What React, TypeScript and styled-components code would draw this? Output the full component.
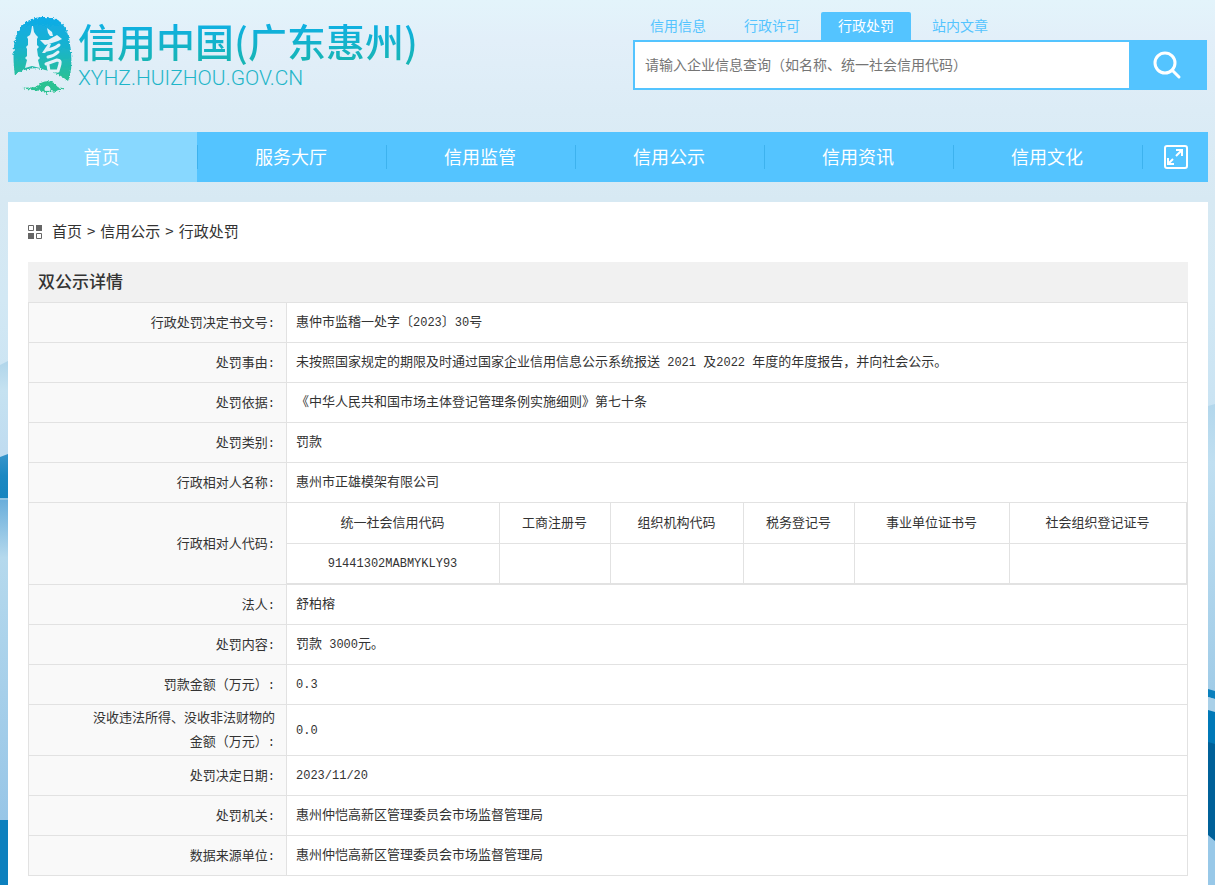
import React, { Fragment } from 'react';
import styled, { createGlobalStyle } from 'styled-components';

const BLUE = '#54c4ff';
const LINE = '#e2e2e2';
const SANS = "'Noto Sans CJK SC', 'Noto Sans', sans-serif";

const GlobalStyle = createGlobalStyle`
  * { box-sizing: border-box; }
  body {
    margin: 0;
    color: #333;
    font-family: ${SANS};
    background: #9ccbe9;
  }
  a { color: inherit; text-decoration: none; }
`;

const Page = styled.div`
  position: relative;
  overflow: hidden;
  background: linear-gradient(
    #e3f4fb 0px, #e2eff9 40px, #dcecf6 110px, #d7e9f3 200px,
    #d2e8f4 300px, #c4e0f2 480px, #b5d8ed 600px, #98c8e8 820px
  );
`;

const Shore = styled.svg<{ $side: 'left' | 'right' }>`
  position: absolute;
  top: 0;
  ${(p) => p.$side}: 0;
`;

const Wrap = styled.div`
  position: relative;
  max-width: 1215px;
  margin: 0 auto;
  padding: 0 7px 0 8px;
`;

const Header = styled.header`
  display: flex;
  justify-content: space-between;
  align-items: flex-start;
  height: 132px;
  padding: 12px 1px 0 4px;
`;

const Brand = styled.a`
  display: flex;
  gap: 4px;
`;

const BrandText = styled.span`
  display: flex;
  flex-direction: column;
  padding-top: 2px;
  white-space: nowrap;
`;

const BrandName = styled.span`
  font-size: 39px;
  font-weight: 500;
  line-height: 52px;
  color: transparent;
  background: linear-gradient(#0fb0e2 20%, #17b5b5 90%);
  background-clip: text;
  -webkit-background-clip: text;
`;

const BrandUrl = styled.span`
  font: 300 21px/24px Roboto, sans-serif;
  color: #1fb5c8;
`;

const Search = styled.form`
  width: 574px;
`;

const Tabs = styled.div`
  display: flex;
  gap: 4px;
`;

const Tab = styled.button<{ $active?: boolean }>`
  width: 90px;
  height: 28px;
  padding: 0 0 2px;
  border: 0;
  border-radius: 2px 2px 0 0;
  font: 14px/26px ${SANS};
  color: ${(p) => (p.$active ? '#fff' : BLUE)};
  background: ${(p) => (p.$active ? BLUE : 'transparent')};
`;

const SearchBar = styled.div`
  display: flex;
  height: 50px;
  border: 2px solid ${BLUE};
  background: ${BLUE};
`;

const SearchInput = styled.input`
  flex: 1;
  min-width: 0;
  padding: 0 10px 2px;
  border: 0;
  border-radius: 0;
  background: #fff;
  font: 14px/20px ${SANS};
  &::placeholder { color: #757575; }
`;

const SearchButton = styled.button`
  display: grid;
  place-items: center;
  width: 76px;
  padding: 0;
  border: 0;
  background: ${BLUE};
`;

const Nav = styled.nav`
  display: flex;
  height: 50px;
  background: ${BLUE};
  color: #fff;
`;

const NavItem = styled.a<{ $active?: boolean }>`
  display: flex;
  flex: 1;
  align-items: center;
  font-size: 18px;
  background: ${(p) => (p.$active ? '#88d8ff' : 'transparent')};
`;

const NavLabel = styled.span<{ $divided: boolean }>`
  flex: 1;
  height: 24px;
  padding-right: 2px;
  line-height: 22px;
  text-align: center;
  border-left: ${(p) => (p.$divided ? '1px solid #3db2ee' : '0')};
`;

const NavMore = styled.button`
  display: flex;
  align-items: center;
  width: 66px;
  padding: 0;
  border: 0;
  background: none;
`;

const NavMoreInner = styled.span`
  display: grid;
  flex: 1;
  place-items: center;
  height: 24px;
  border-left: 1px solid #3db2ee;
`;

const Panel = styled.main`
  margin-top: 20px;
  padding: 0 20px 20px;
  background: #fff;
`;

const Crumbs = styled.nav`
  display: flex;
  align-items: center;
  gap: 5px;
  height: 60px;
  font-size: 15px;
  line-height: 24px;
  svg { margin-right: 5px; }
  a, span { padding-bottom: 2px; }
`;

const Heading = styled.h1`
  height: 40px;
  margin: 0;
  padding-left: 10px;
  background: #f1f1f1;
  font-size: 17px;
  font-weight: 500;
  line-height: 38px;
`;

const Table = styled.table`
  width: 100%;
  border-collapse: collapse;
  table-layout: fixed;
  font-size: 13px;
  line-height: 24px;
`;

const LabelCell = styled.th`
  width: 258px;
  height: 40px;
  padding: 0 11px 2px 60px;
  border: 1px solid ${LINE};
  background: #f9f9f9;
  font-weight: 400;
  text-align: right;
`;

const ValueCell = styled.td<{ $flush?: boolean }>`
  padding: ${(p) => (p.$flush ? '0' : '0 9px 3px')};
  border: 1px solid ${LINE};
`;

const CodeTable = styled.table`
  width: 100%;
  border-spacing: 0;
  table-layout: fixed;
  text-align: center;
  th, td {
    height: 40px;
    padding: 0 1px 3px 0;
    border: solid ${LINE};
    border-width: 0 1px 1px 0;
    font-weight: 400;
  }
  th { height: 41px; }
`;

const Latin = styled.span`
  font: 12px/16px 'Liberation Mono', monospace;
  white-space: pre-wrap;
`;

/* Sets digits, letters and half-width marks in the narrow monospace face. */
function Mixed({ text }: { text: string }) {
  return (
    <>
      {text.split(/([\x20-\x7e]+)/).map((part, i) =>
        i % 2 ? <Latin key={i}>{part}</Latin> : <Fragment key={i}>{part}</Fragment>
      )}
    </>
  );
}

function Emblem() {
  return (
    <svg width="62" height="84" viewBox="0 0 62 84" aria-hidden="true">
      <defs>
        <linearGradient id="seal" x1="0" y1="0" x2="0" y2="1">
          <stop offset="0" stopColor="#0fabe8" />
          <stop offset="0.45" stopColor="#18b2d0" />
          <stop offset="1" stopColor="#2cc292" />
        </linearGradient>
        <filter id="rough" x="-10%" y="-10%" width="120%" height="120%">
          <feTurbulence type="fractalNoise" baseFrequency="0.45" numOctaves="2" seed="4" />
          <feDisplacementMap in="SourceGraphic" scale="4" xChannelSelector="R" yChannelSelector="G" />
        </filter>
      </defs>
      <g filter="url(#rough)">
        <path
          fill="url(#seal)"
          d="M13 11C20 4 38 3 46 8C54 13 58 25 59 40C60 54 59 63 56 69C47 62 40 59 33 58C23 54 12 57 3 63C1 52 1 36 3 28C5 19 9 14 13 11Z"
        />
        <path fill="#2cc292" d="M10 76C20 75 24 76 27 73C30 68 41 68 44 73C46 76 48 76 52 76L49 78L44 80L38 79L35 82L30 79L20 78Z" />
      </g>
      <g fill="#e3f1f9">
        <path d="M20 14L21 14L22 20L24 23L26 25L25 27L25 33L27 35L25 37L26 44L28 46L26 48L28 56L20 54L13 56L15 48L13 46L15 44L15 37L14 35L16 33L16 27L15 25L18 23L19 20Z" />
        <path d="M35 16L40 20L41 24L38 24L36 21Z" />
        <path d="M28 28L36 28L45 23L50 27L46 29L37 32L33 33Z" />
        <path d="M36 32L39 32L37 37L33 41L30 41Z" />
      </g>
      <g fill="none" stroke="#e3f1f9" strokeLinecap="round" strokeLinejoin="round">
        <path strokeWidth="3" d="M35 38Q42 37 47 33M36 45Q42 44 46 40" />
        <path strokeWidth="3" d="M34 52L45 48Q49 48 48 52L46 59M36 53L37 59L45 59" />
        <path fill="#e3f1f9" strokeWidth="1" d="M33 78C32 73 39 73 38 78Z" />
      </g>
    </svg>
  );
}

function LeftShore() {
  return (
    <Shore $side="left" width="8" height="885" viewBox="0 0 8 885" aria-hidden="true">
      <defs>
        <linearGradient id="mist" x1="0" y1="0" x2="0" y2="1">
          <stop offset="0" stopColor="#b0d5ea" />
          <stop offset="0.3" stopColor="#c5e2f1" />
          <stop offset="1" stopColor="#bfdbf0" />
        </linearGradient>
        <linearGradient id="hill" x1="0" y1="0" x2="0" y2="1">
          <stop offset="0" stopColor="#3795cb" />
          <stop offset="0.5" stopColor="#1b88c2" />
          <stop offset="1" stopColor="#1685bf" />
        </linearGradient>
        <linearGradient id="water" x1="0" y1="0" x2="0" y2="1">
          <stop offset="0" stopColor="#6aaedb" />
          <stop offset="0.18" stopColor="#b5d9ed" />
          <stop offset="1" stopColor="#98c6e7" />
        </linearGradient>
      </defs>
      <path fill="url(#mist)" d="M0 365L8 361V460H0Z" />
      <path fill="url(#hill)" d="M0 457L8 454V498H0Z" />
      <path fill="#90c5e3" d="M0 498H8V500H0Z" />
      <path fill="url(#water)" d="M0 500H8V820H0Z" />
      <path fill="#0c80be" d="M0 820H8V885H0Z" />
    </Shore>
  );
}

function RightShore() {
  return (
    <Shore $side="right" width="7" height="885" viewBox="0 0 7 885" aria-hidden="true">
      <defs>
        <linearGradient id="haze" x1="0" y1="0" x2="0" y2="1">
          <stop offset="0" stopColor="#b3d7ec" />
          <stop offset="0.2" stopColor="#c0dff1" />
          <stop offset="1" stopColor="#9fcbe7" />
        </linearGradient>
      </defs>
      <path fill="url(#haze)" d="M0 406L7 404V700H0Z" />
      <path fill="#0a80bd" d="M0 689L7 691V699L0 697Z" />
      <path fill="#a9d0e8" d="M0 697L7 699V712L0 710Z" />
      <path fill="#0079b8" d="M0 710L7 712V760H0Z" />
      <path fill="#006199" d="M0 742L7 744V841L0 835Z" />
    </Shore>
  );
}

const tabs = ['信用信息', '行政许可', '行政处罚', '站内文章'];
const navItems = ['首页', '服务大厅', '信用监管', '信用公示', '信用资讯', '信用文化'];

const codeColumns = [
  { name: '统一社会信用代码', value: '91441302MABMYKLY93', width: 213 },
  { name: '工商注册号', value: '', width: 111 },
  { name: '组织机构代码', value: '', width: 133 },
  { name: '税务登记号', value: '', width: 111 },
  { name: '事业单位证书号', value: '', width: 155 },
  { name: '社会组织登记证号', value: '', width: undefined },
];

const rows: { label: string; value?: string }[] = [
  { label: '行政处罚决定书文号:', value: '惠仲市监稽一处字〔2023〕30号' },
  {
    label: '处罚事由:',
    value: '未按照国家规定的期限及时通过国家企业信用信息公示系统报送 2021 及2022 年度的年度报告，并向社会公示。',
  },
  { label: '处罚依据:', value: '《中华人民共和国市场主体登记管理条例实施细则》第七十条' },
  { label: '处罚类别:', value: '罚款' },
  { label: '行政相对人名称:', value: '惠州市正雄模架有限公司' },
  { label: '行政相对人代码:' },
  { label: '法人:', value: '舒柏榕' },
  { label: '处罚内容:', value: '罚款 3000元。' },
  { label: '罚款金额（万元）:', value: '0.3' },
  { label: '没收违法所得、没收非法财物的金额（万元）:', value: '0.0' },
  { label: '处罚决定日期:', value: '2023/11/20' },
  { label: '处罚机关:', value: '惠州仲恺高新区管理委员会市场监督管理局' },
  { label: '数据来源单位:', value: '惠州仲恺高新区管理委员会市场监督管理局' },
];

function Codes() {
  return (
    <CodeTable>
      <colgroup>
        {codeColumns.map((c) => (
          <col key={c.name} width={c.width} />
        ))}
      </colgroup>
      <thead>
        <tr>
          {codeColumns.map((c) => (
            <th key={c.name} scope="col">{c.name}</th>
          ))}
        </tr>
      </thead>
      <tbody>
        <tr>
          {codeColumns.map((c) => (
            <td key={c.name}><Mixed text={c.value} /></td>
          ))}
        </tr>
      </tbody>
    </CodeTable>
  );
}

export default function App() {
  return (
    <Page>
      <GlobalStyle />
      <LeftShore />
      <RightShore />
      <Wrap>
        <Header>
          <Brand href="#">
            <Emblem />
            <BrandText>
              <BrandName>信用中国(广东惠州)</BrandName>
              <BrandUrl>XYHZ.HUIZHOU.GOV.CN</BrandUrl>
            </BrandText>
          </Brand>
          <Search onSubmit={(e) => e.preventDefault()}>
            <Tabs>
              {tabs.map((t) => (
                <Tab key={t} type="button" $active={t === '行政处罚'}>{t}</Tab>
              ))}
            </Tabs>
            <SearchBar>
              <SearchInput
                type="text"
                aria-label="企业信息查询"
                placeholder="请输入企业信息查询（如名称、统一社会信用代码）"
              />
              <SearchButton type="submit" aria-label="搜索">
                <svg width="30" height="30" viewBox="0 0 30 30" fill="none" stroke="#fff" strokeWidth="3" strokeLinecap="round">
                  <circle cx="13" cy="13" r="10" />
                  <path d="M20 20L27 27" />
                </svg>
              </SearchButton>
            </SearchBar>
          </Search>
        </Header>

        <Nav>
          {navItems.map((n, i) => (
            <NavItem key={n} href="#" $active={i === 0}>
              <NavLabel $divided={i > 0}>{n}</NavLabel>
            </NavItem>
          ))}
          <NavMore type="button" aria-label="展开">
            <NavMoreInner>
              <svg width="24" height="24" viewBox="0 0 24 24" fill="none" stroke="#fff" strokeWidth="2">
                <rect x="1" y="1" width="22" height="22" rx="2" />
                <path d="M12 5H18V11M18 5L12 11M4 13V19H10M4 19L9 14" />
              </svg>
            </NavMoreInner>
          </NavMore>
        </Nav>

        <Panel>
          <Crumbs>
            <svg width="14" height="14" viewBox="0 0 14 14" aria-hidden="true">
              <path fill="none" stroke="#666" d="M0.5 0.5H5.5V5.5H0.5ZM8.5 8.5H13.5V13.5H8.5Z" />
              <path fill="#666" d="M8 0H14V6H8ZM0 8H6V14H0Z" />
            </svg>
            <a href="#">首页</a>
            <span>&gt;</span>
            <a href="#">信用公示</a>
            <span>&gt;</span>
            <a href="#">行政处罚</a>
          </Crumbs>
          <Heading>双公示详情</Heading>
          <Table>
            <tbody>
              {rows.map((r) => (
                <tr key={r.label}>
                  <LabelCell scope="row"><Mixed text={r.label} /></LabelCell>
                  {r.value === undefined ? (
                    <ValueCell $flush><Codes /></ValueCell>
                  ) : (
                    <ValueCell><Mixed text={r.value} /></ValueCell>
                  )}
                </tr>
              ))}
            </tbody>
          </Table>
        </Panel>
      </Wrap>
    </Page>
  );
}
